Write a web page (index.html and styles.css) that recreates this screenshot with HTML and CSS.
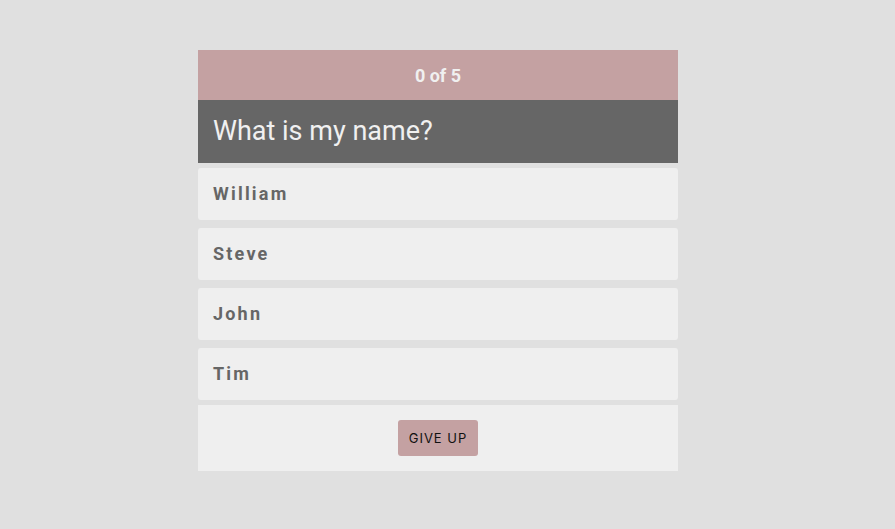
FILE: index.html
```html
<!DOCTYPE html>
<html>
<head>
<meta charset="utf-8">
<link rel="stylesheet" href="styles.css">
</head>
<body>
<div class="quiz">
  <div class="progress">0 of 5</div>
  <div class="question">What is my name?</div>
  <div class="options">
    <div class="option">William</div>
    <div class="option">Steve</div>
    <div class="option">John</div>
    <div class="option">Tim</div>
  </div>
  <div class="footer"><button class="giveup">GIVE UP</button></div>
</div>
</body>
</html>
```
FILE: styles.css
```css
html, body { margin: 0; padding: 0; }
body {
  background: #e0e0e0;
  font-family: Roboto, "Liberation Sans", sans-serif;
  height: 529px;
  padding-right: 19px;
  box-sizing: border-box;
}
.quiz {
  width: 480px;
  margin: 50px auto 0;
  display: flex;
  flex-direction: column;
}
.progress {
  height: 50px;
  background: #c4a1a2;
  color: #f0f0f0;
  font-weight: bold;
  font-size: 18px;
  display: flex;
  align-items: center;
  justify-content: center;
}
.question {
  height: 63px;
  background: #666666;
  color: #f0f0f0;
  font-size: 27px;
  padding-left: 15px;
  display: flex;
  align-items: center;
  padding-bottom: 1px;
  box-sizing: border-box;
}
.options {
  display: flex;
  flex-direction: column;
  gap: 8px;
  padding-top: 5px;
}
.option {
  height: 52px;
  background: #efefef;
  border-radius: 3px;
  color: #666666;
  font-weight: bold;
  font-size: 18px;
  letter-spacing: 2.2px;
  padding-left: 15px;
  padding-bottom: 1px;
  box-sizing: border-box;
  display: flex;
  align-items: center;
}
.footer {
  margin-top: 5px;
  height: 66px;
  background: #efefef;
  display: flex;
  justify-content: center;
  padding-top: 15px;
  box-sizing: border-box;
}
.giveup {
  width: 80px;
  height: 36px;
  background: #c4a1a2;
  border: none;
  border-radius: 3px;
  color: #111;
  font-family: Inter, "Open Sans", sans-serif;
  font-size: 13px;
  letter-spacing: 1px;
  padding: 0;
}
```
